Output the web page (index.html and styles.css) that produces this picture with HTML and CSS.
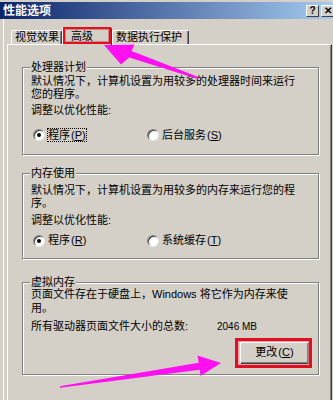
FILE: index.html
```html
<!DOCTYPE html>
<html lang="zh-CN">
<head>
<meta charset="utf-8">
<title>性能选项</title>
<link rel="stylesheet" href="styles.css">
</head>
<body>
<div class="window">
  <div class="titlebar">
    <span class="title">性能选项</span>
    <div class="tbtns">
      <span class="tbtn">?</span>
      <span class="tbtn">✕</span>
    </div>
  </div>
  <div class="main">
    <div class="tabs">
      <div class="tab t1">视觉效果</div>
      <div class="tab t2 active">高级</div>
      <div class="tab t3">数据执行保护</div>
    </div>
    <div class="panel">
      <fieldset class="group g1">
        <legend>处理器计划</legend>
        <p class="desc">默认情况下，计算机设置为用较多的处理器时间来运行<br>您的程序。</p>
        <p class="adjust">调整以优化性能:</p>
        <div class="radios">
          <div class="radio"><span class="dot on"></span><span class="lbl focus">程序<span class="mn">(<u>P</u>)</span></span></div>
          <div class="radio"><span class="dot"></span><span class="lbl">后台服务<span class="mn">(<u>S</u>)</span></span></div>
        </div>
      </fieldset>
      <fieldset class="group g2">
        <legend>内存使用</legend>
        <p class="desc">默认情况下，计算机设置为用较多的内存来运行您的程<br>序。</p>
        <p class="adjust">调整以优化性能:</p>
        <div class="radios">
          <div class="radio"><span class="dot on"></span><span class="lbl">程序<span class="mn">(<u>R</u>)</span></span></div>
          <div class="radio"><span class="dot"></span><span class="lbl">系统缓存<span class="mn">(<u>T</u>)</span></span></div>
        </div>
      </fieldset>
      <fieldset class="group g3">
        <legend>虚拟内存</legend>
        <p class="desc">页面文件存在于硬盘上，Windows 将它作为内存来使<br>用。</p>
        <p class="total"><span class="tlabel">所有驱动器页面文件大小的总数:</span><span class="tval">2046 MB</span></p>
        <div class="btnrow">
          <div class="btn">更改<span class="mn">(<u>C</u>)</span></div>
        </div>
      </fieldset>
    </div>
  </div>
  <svg class="arrows" width="333" height="400" viewBox="0 0 333 400">
    <polygon points="104,45 121,64.5 129.2,57.6 197.7,78.9 198.3,77.1 131.6,51.0 134.5,44.5" fill="#ff10f0"/>
    <polygon points="221,363 197.5,355.5 198.7,362.7 59.9,386.2 60.1,387.8 199.7,369.7 200.5,376" fill="#ff10f0"/>
  </svg>
</div>
</body>
</html>
```

FILE: styles.css
```css
html, body {
  margin: 0;
  padding: 0;
}
body {
  width: 333px;
  height: 400px;
  overflow: hidden;
  background: #d4d0c8;
  font-family: "Liberation Sans", "Noto Sans CJK SC", sans-serif;
  font-size: 11px;
  color: #000;
}
.window {
  position: relative;
  height: 400px;
  padding-top: 2px;
  box-sizing: border-box;
}
.titlebar {
  height: 17px;
  background: linear-gradient(to right, #0a246a 0%, #a6caf0 100%);
  display: flex;
  align-items: center;
  justify-content: space-between;
  padding-left: 3px;
}
.title {
  color: #fff;
  font-weight: bold;
  font-size: 12px;
  line-height: 14px;
}
.tbtns {
  display: flex;
  gap: 2px;
  margin-right: -1px;
}
.tbtn {
  width: 13px;
  height: 12px;
  box-sizing: border-box;
  background: #d4d0c8;
  border: 1px solid;
  border-color: #fff #404040 #404040 #fff;
  font: bold 10px/10px "Liberation Sans", sans-serif;
  text-align: center;
  color: #000;
}
.main {
  margin-left: 3px;
  padding-left: 3px;
  border-left: 1px solid #fff;
  display: flex;
  flex-direction: column;
}
.tabs {
  display: flex;
  align-items: flex-end;
  height: 18px;
  margin-top: 8px;
  padding-left: 4px;
  margin-bottom: -1px;
  position: relative;
  z-index: 1;
}
.tab {
  height: 14px;
  margin-bottom: 1px;
  box-sizing: border-box;
  border: 1px solid;
  border-bottom: none;
  border-color: #fff #404040 transparent #fff;
  border-radius: 2px 2px 0 0;
  box-shadow: inset -1px 0 #808080;
  background: #d4d0c8;
  line-height: 12px;
  white-space: nowrap;
}
.t1 { width: 51px; padding-left: 3px; }
.t2 { width: 50px; padding-left: 8px; }
.t3 { width: 77px; padding-left: 3px; }
.tab.active {
  height: 18px;
  margin-bottom: 0;
  padding-top: 2px;
  position: relative;
}
.tab.active::after {
  content: "";
  position: absolute;
  left: 0;
  top: -1px;
  width: 48px;
  height: 17px;
  box-sizing: border-box;
  border: 2px solid #e0121c;
  box-shadow: inset 0 0 0 1px rgba(210, 60, 70, 0.5);
}
.panel {
  width: 325px;
  height: 360px;
  box-sizing: border-box;
  border: 1px solid;
  border-color: #fff #404040 #404040 #fff;
  box-shadow: inset -1px 0 #808080;
  padding: 16px 12px 0 14px;
}
.group {
  margin: 0;
  min-width: 0;
  border: 1px solid #808080;
  box-shadow: 1px 1px 0 #fff, inset 1px 1px 0 #fff;
  padding: 0 9px 0 8px;
}
.group legend {
  padding: 0 1px;
  margin-left: -1px;
  line-height: 12px;
  background: #d4d0c8;
}
.desc, .adjust, .total {
  margin: 0;
  line-height: 12.5px;
  white-space: nowrap;
}
.mn {
  margin-left: 1px;
}
.g1 { padding-top: 2px; padding-bottom: 12px; }
.g1 .adjust { margin-top: 4px; }
.g1 .radios { margin-top: 11.5px; }
.g2 { margin-top: 12px; padding-top: 5px; padding-bottom: 10px; }
.g2 .adjust { margin-top: 5px; }
.g2 .radios { margin-top: 7px; }
.g3 { margin-top: 17.5px; padding-top: 0; padding-bottom: 10px; }
.g3 .desc { line-height: 13.5px; }
.g3 .total { margin-top: 5px; }
.radios {
  display: flex;
  height: 14px;
  align-items: center;
  padding-left: 2px;
}
.radio {
  display: flex;
  align-items: center;
  width: 114px;
}
.dot {
  width: 12px;
  height: 12px;
  box-sizing: border-box;
  border-radius: 50%;
  background: #fff;
  border: 1px solid;
  border-color: #808080 #e8e8e8 #e8e8e8 #808080;
  box-shadow: inset 1px 1px 0 #404040;
  margin-right: 2px;
  display: flex;
  align-items: center;
  justify-content: center;
}
.dot.on::before {
  content: "";
  width: 4px;
  height: 4px;
  border-radius: 50%;
  background: #000;
}
.lbl {
  border: 1px solid transparent;
  line-height: 12.5px;
}
.lbl.focus {
  border: 1px dotted #000;
}
.tlabel {
  display: inline-block;
  width: 186px;
}
.tval {
  font-size: 10px;
}
.btnrow {
  display: flex;
  justify-content: flex-end;
  margin-top: 8px;
}
.btn {
  position: relative;
  width: 69px;
  height: 22px;
  box-sizing: border-box;
  border: 1px solid;
  border-color: #fff #404040 #404040 #fff;
  box-shadow: inset -1px -1px 0 #808080;
  display: flex;
  align-items: center;
  justify-content: center;
  line-height: 12.5px;
}
.btn::after {
  content: "";
  position: absolute;
  left: -6px;
  top: -5px;
  width: 77px;
  height: 30px;
  box-sizing: border-box;
  border: 3px solid #dd1122;
  box-shadow: inset 0 0 0 1px rgba(240, 140, 150, 0.7);
}
.arrows {
  position: absolute;
  left: 0;
  top: 0;
  pointer-events: none;
}
```
